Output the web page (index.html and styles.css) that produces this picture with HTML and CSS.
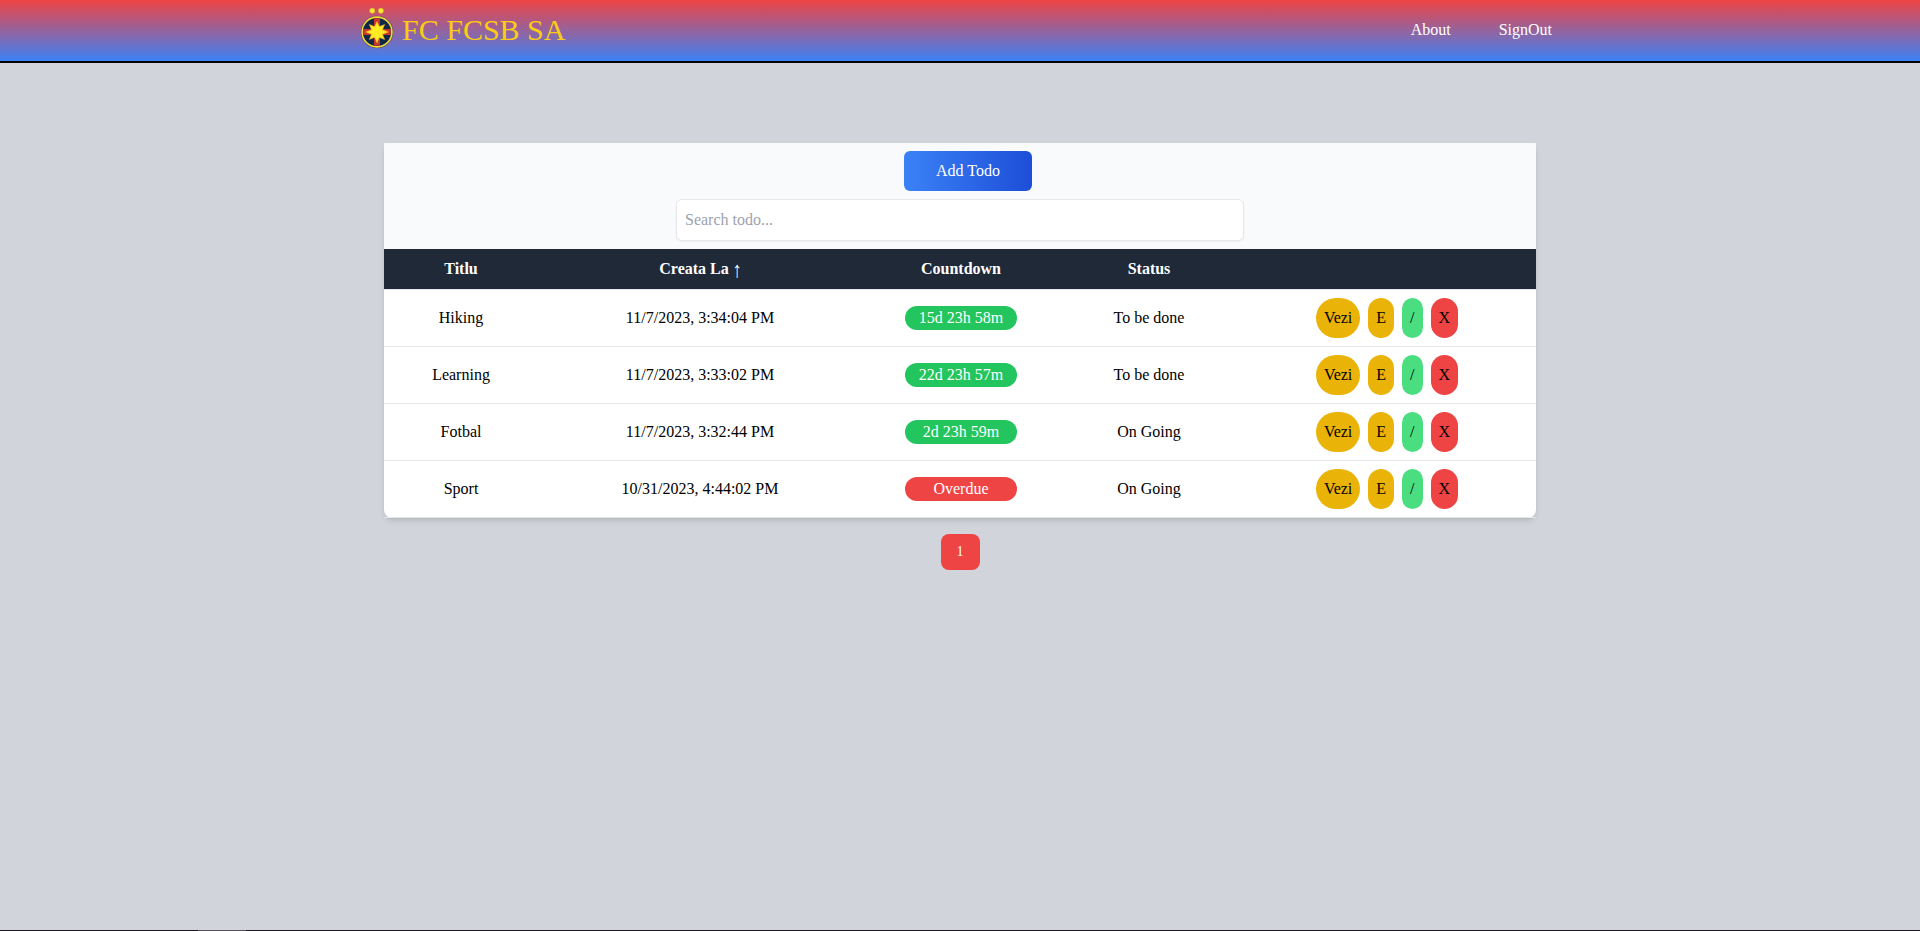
FILE: index.html
```html
<!DOCTYPE html>
<html lang="ro">
<head>
<meta charset="utf-8">
<title>FC FCSB SA</title>
<link rel="stylesheet" href="styles.css">
</head>
<body>
<header class="navbar">
  <div class="brand">
    <svg class="logo" width="34" height="42" viewBox="0 0 34 42">
      <circle cx="12.3" cy="3.8" r="2.7" fill="#f5ea2a" stroke="#c98a45" stroke-width=".5"/>
      <circle cx="20.9" cy="3.8" r="2.7" fill="#f5ea2a" stroke="#c98a45" stroke-width=".5"/>
      <circle cx="17" cy="25" r="16.2" fill="#5c4a50"/>
      <circle cx="17" cy="25" r="14.9" fill="#102848" stroke="#f2dc35" stroke-width="1.6"/>
      <path d="M14 11.2h6v10.8h10.8v6H20v10.8h-6V28H3.2v-6H14z" fill="#c9372c"/>
      <path d="M17 14.5l2.3 5.1 5.4-2.2-2.2 5.4 6 2.2-6 2.2 2.2 5.4-5.4-2.2-2.3 5.6-2.3-5.6-5.4 2.2 2.2-5.4-6-2.2 6-2.2-2.2-5.4 5.4 2.2z" fill="#ffec24" stroke="#f2a52a" stroke-width=".5"/>
    </svg>
    <span class="brand-name">FC FCSB SA</span>
  </div>
  <nav class="links"><a>About</a><a>SignOut</a></nav>
</header>
<main>
  <section class="card">
    <div class="tools">
      <button class="add">Add Todo</button>
      <input class="search" type="text" placeholder="Search todo...">
    </div>
    <div class="row head"><span>Titlu</span><span>Creata La <span class="arrow">↑</span></span><span>Countdown</span><span>Status</span><span></span></div>
    <div class="row"><span>Hiking</span><span>11/7/2023, 3:34:04 PM</span><span><b class="pill">15d 23h 58m</b></span><span>To be done</span><span class="actions"><button class="act">Vezi</button><button class="act">E</button><button class="act done">/</button><button class="act delete">X</button></span></div>
    <div class="row"><span>Learning</span><span>11/7/2023, 3:33:02 PM</span><span><b class="pill">22d 23h 57m</b></span><span>To be done</span><span class="actions"><button class="act">Vezi</button><button class="act">E</button><button class="act done">/</button><button class="act delete">X</button></span></div>
    <div class="row"><span>Fotbal</span><span>11/7/2023, 3:32:44 PM</span><span><b class="pill">2d 23h 59m</b></span><span>On Going</span><span class="actions"><button class="act">Vezi</button><button class="act">E</button><button class="act done">/</button><button class="act delete">X</button></span></div>
    <div class="row last"><span>Sport</span><span>10/31/2023, 4:44:02 PM</span><span><b class="pill overdue">Overdue</b></span><span>On Going</span><span class="actions"><button class="act">Vezi</button><button class="act">E</button><button class="act done">/</button><button class="act delete">X</button></span></div>
  </section>
  <div class="pager"><button class="page">1</button></div>
</main>
<footer class="bottom-edge"><i class="edge-tab"></i></footer>
</body>
</html>
```
FILE: styles.css
```css
* { box-sizing: border-box; }
body {
  margin: 0;
  height: 931px;
  overflow: hidden;
  display: flex;
  flex-direction: column;
  background: #d1d5db;
  color: #000;
  font: 16px/24px "Liberation Serif", "Times New Roman", serif;
}
button, input { font: inherit; color: inherit; border: 0; margin: 0; }
.navbar {
  height: 63px;
  flex: none;
  display: flex;
  justify-content: space-between;
  padding: 0 368px 0 360px;
  border-bottom: 2px solid #000;
  background: linear-gradient(to bottom, #ef4444, #3b82f6) padding-box;
}
.brand { display: flex; align-items: flex-start; gap: 8px; padding-top: 7px; }
.logo { display: block; }
.brand-name { font-size: 30px; line-height: 36px; color: #facc15; padding-top: 5px; }
.links { display: flex; align-items: center; gap: 48px; color: #fff; padding-bottom: 1px; }
main { flex: 1; padding-top: 80px; }
.card {
  width: 1152px;
  margin: 0 auto;
  background: #fff;
  border-radius: 0 0 8px 8px;
  box-shadow: 0 4px 6px -1px rgba(0,0,0,.1), 0 2px 4px -2px rgba(0,0,0,.1);
}
.tools {
  height: 106px;
  display: flex;
  flex-direction: column;
  align-items: center;
  gap: 8px;
  padding-top: 8px;
  background: #f9fafb;
}
.add {
  width: 128px;
  height: 40px;
  margin-left: 16px;
  padding: 0;
  color: #fff;
  border-radius: 6px;
  background: linear-gradient(to right, #3b82f6, #1d4ed8);
}
.search {
  width: 568px;
  height: 42px;
  padding: 8px;
  background: #fff;
  border: 1px solid #e5e7eb;
  border-radius: 6px;
  box-shadow: 0 1px 2px rgba(0,0,0,.05);
}
.search::placeholder { color: #9ca3af; }
.row {
  display: grid;
  grid-template-columns: 154px 324px 198px 178px 298px;
  align-items: center;
  text-align: center;
  height: 57px;
  border-top: 1px solid #e5e7eb;
}
.row.head { height: 40px; border: 0; background: #1f2937; color: #fff; font-weight: 700; }
.row.last { height: 58px; border-bottom: 1px solid #e5e7eb; }
.arrow {
  display: inline-block;
  width: 8px;
  line-height: 16px;
  font-weight: 400;
  transform: translateY(1px) scale(1.15, 1.4);
}
.pill {
  display: block;
  width: 112px;
  margin: 0 auto;
  border-radius: 12px;
  background: #22c55e;
  color: #fff;
  font-weight: 400;
}
.pill.overdue { background: #ef4444; }
.actions { display: flex; justify-content: center; gap: 8px; }
.act { height: 40px; padding: 8px; border-radius: 9999px; background: #eab308; }
.act.done { background: #4ade80; }
.act.delete { background: #ef4444; }
.pager { display: flex; justify-content: center; margin-top: 16px; }
.page {
  padding: 8px 16px;
  border-radius: 8px;
  background: #ef4444;
  color: #fff;
  font-size: 14px;
  line-height: 20px;
}
.bottom-edge { height: 1px; flex: none; background: #1a1520; padding-left: 198px; }
.edge-tab { display: block; width: 48px; height: 1px; background: #554f5b; }
```
